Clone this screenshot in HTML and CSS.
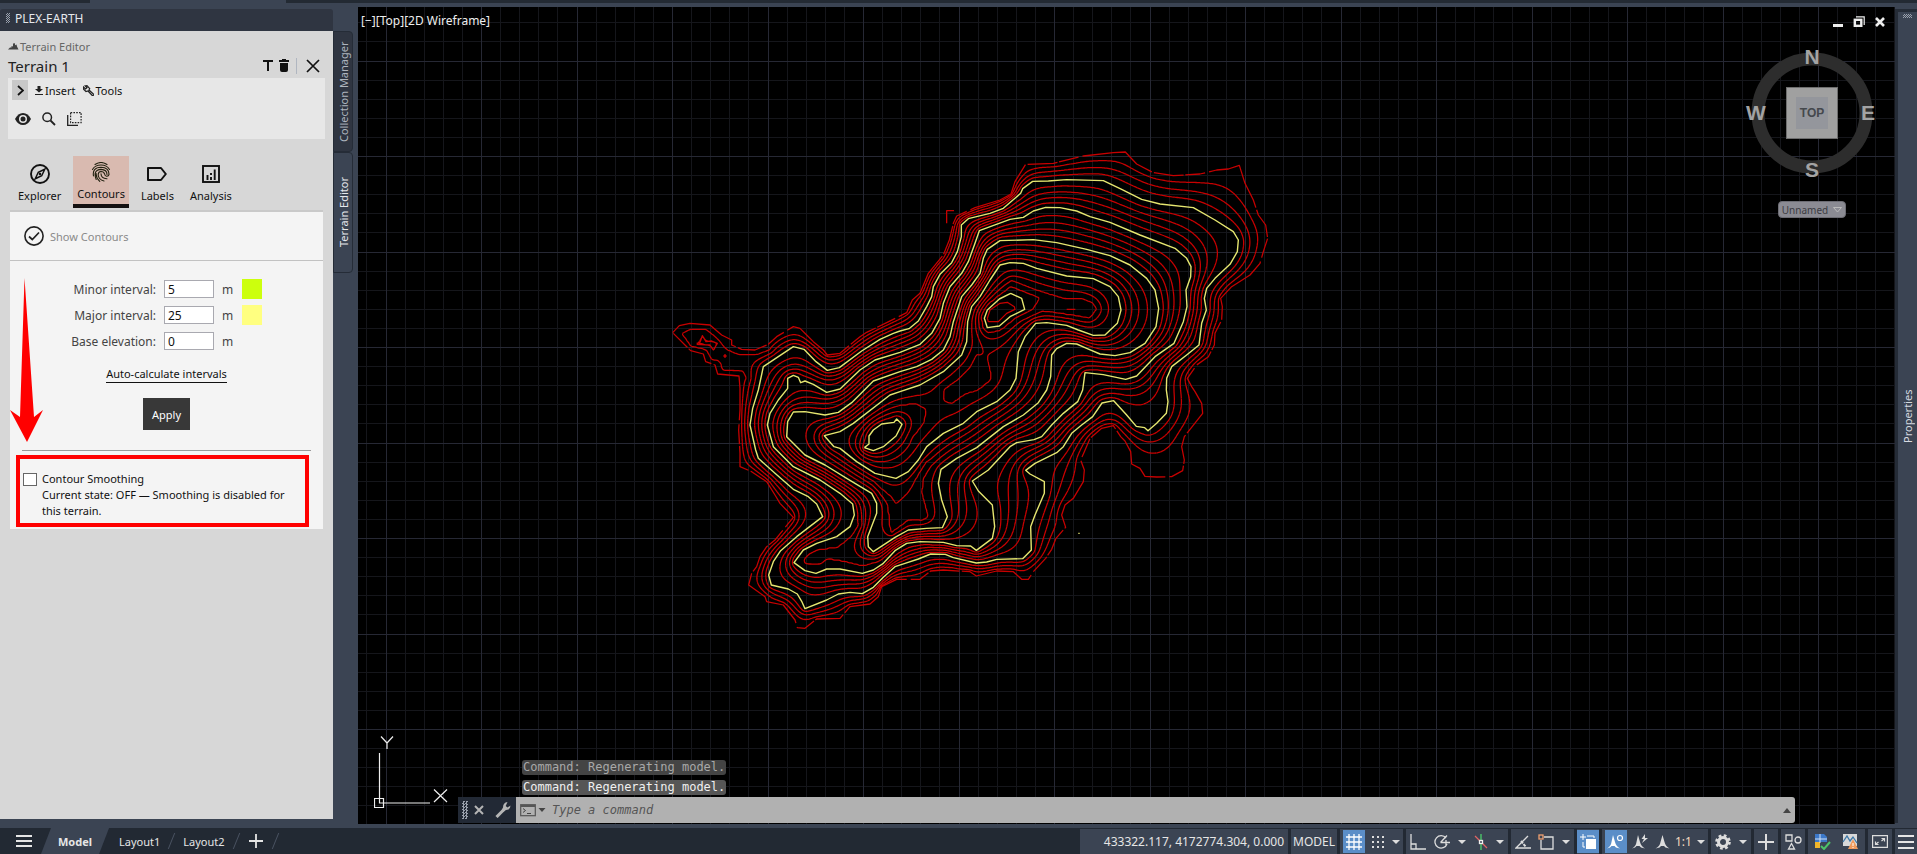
FILE: index.html
```html
<!DOCTYPE html>
<html lang="en">
<head>
<meta charset="utf-8">
<title>Plex-Earth Terrain Editor</title>
<link rel="stylesheet" href="styles.css">
</head>
<body>
<div class="file-strip"><span class="file-tab"></span></div>
<main class="workspace">
  <section class="palette">
    <header class="palette-head"><span class="grip"></span>PLEX-EARTH</header>
    <div class="palette-body">
      <div class="crumb"><svg width="11" height="7" viewBox="0 0 11 7"><path d="M0 6.500 2 4.500h1.500V3L5 3.500V.5L7 .3v2l1.500-.8.5 2 1.500 3z" fill="#444"/></svg>Terrain Editor</div>
      <div class="title-row">
        <h1>Terrain 1</h1>
        <button class="icon-btn" aria-label="Rename"><svg width="10" height="11" viewBox="0 0 10 11"><path d="M0 0h10v2H6v9H4V2H0z" fill="#111"/></svg></button>
        <button class="icon-btn" aria-label="Delete"><svg width="10" height="13" viewBox="0 0 10 13"><path d="M0 1h3V0h4v1h3v2H0zM1 4h8v7q0 2-2 2H3q-2 0-2-2z" fill="#111"/></svg></button>
        <span class="divider"></span>
        <button class="icon-btn close" aria-label="Close"><svg width="14" height="14" viewBox="0 0 14 14"><path d="M1 1l12 12M13 1 1 13" stroke="#111" stroke-width="1.700"/></svg></button>
      </div>
      <div class="toolbox">
        <div class="tool-row">
          <button class="expand" aria-label="Expand"><svg width="7" height="11" viewBox="0 0 7 11"><path d="M1 1l5 4.500L1 10" fill="none" stroke="#111" stroke-width="1.800"/></svg></button>
          <button class="text-btn"><svg width="8" height="9" viewBox="0 0 8 9"><path d="M2.500 0h3v3H8L4 6.500 0 3h2.500zM0 8h8v1H0z" fill="#222"/></svg>Insert</button>
          <button class="text-btn"><svg width="11" height="11" viewBox="0 0 11 11"><path d="M4 .7 6.700 3.500 6 5l5 4.500L9.700 11 5 6 3 6.500.3 4l.2-2L2.500 4 4 2.800 2.200 1z" fill="none" stroke="#222" stroke-width="1.200"/></svg>Tools</button>
        </div>
        <div class="tool-row second">
          <button class="icon-btn" aria-label="Visibility"><svg width="16" height="12" viewBox="0 0 16 12"><path d="M0 6Q3 0 8 0t8 6q-3 6-8 6T0 6z" fill="#222"/><circle cx="8" cy="6" r="4" fill="#e7e7e7"/><circle cx="8" cy="6" r="2.500" fill="#222"/></svg></button>
          <button class="icon-btn" aria-label="Zoom"><svg width="14" height="14" viewBox="0 0 14 14"><circle cx="5.200" cy="5.200" r="4.300" fill="none" stroke="#222" stroke-width="1.500"/><path d="M8.500 8.500 13 13" stroke="#222" stroke-width="1.800"/></svg></button>
          <button class="icon-btn" aria-label="Select region"><svg width="15" height="14" viewBox="0 0 15 14"><path d="M.7 3v10.300H11" fill="none" stroke="#222" stroke-width="1.300"/><rect x="3.600" y=".6" width="10.500" height="10" fill="none" stroke="#222" stroke-width="1.200" stroke-dasharray="1.600 1.200"/></svg></button>
        </div>
      </div>
      <nav class="tabs">
        <button class="tab"><svg width="20" height="20" viewBox="0 0 20 20"><circle cx="10" cy="10" r="9" fill="none" stroke="#111" stroke-width="1.900"/><path d="M14.800 5.200 11.700 11.700 5.200 14.800 8.300 8.300z" fill="none" stroke="#111" stroke-width="1.500"/><circle cx="10" cy="10" r="1.300" fill="#111"/></svg>Explorer</button>
        <button class="tab active"><svg width="20" height="20" viewBox="0 0 20 20" fill="none" stroke="#221" stroke-width="1.100" stroke-linecap="round"><path d="M4 2.500Q10-1.500 16 2.500M1.500 7.500Q4 3 10 3t8.500 4.500M2.500 14Q1 5.500 10 5.200q8.200.3 8 7.300-.5 2-2.500 1.700-1.700-.3-1.900-2.200Q13 9.500 10 9.500q-3 .3-2.800 3.500.4 4.500 5.800 6M5.200 17.500Q1.500 8 10 7.400q6 .3 6 5M8.800 19.300Q4.800 15.500 5.200 11.500M10 11.800q.2 5 6 4.900"/></svg>Contours</button>
        <button class="tab"><svg width="20" height="20" viewBox="0 0 20 20"><path d="M1 4h13l4.800 6-4.800 6H1z" fill="none" stroke="#111" stroke-width="2" stroke-linejoin="round"/></svg>Labels</button>
        <button class="tab"><svg width="20" height="20" viewBox="0 0 20 20"><rect x="2" y="2" width="16" height="16" fill="none" stroke="#111" stroke-width="1.900"/><path d="M6.500 11v5M10 13v3M10 9v2M13.700 5.500V16" stroke="#111" stroke-width="1.900"/></svg>Analysis</button>
      </nav>
      <div class="panel">
        <div class="show-row"><svg width="20" height="20" viewBox="0 0 20 20"><circle cx="10" cy="10" r="9.100" fill="none" stroke="#222" stroke-width="1.600"/><path d="M5 10.500 8.300 13.500 15 6.500" fill="none" stroke="#222" stroke-width="1.700"/></svg><span>Show Contours</span></div>
        <form class="intervals" onsubmit="return false">
          <label for="minor">Minor interval:</label><input id="minor" type="text" value="5"><span>m</span><button type="button" class="swatch lime" aria-label="Minor colour"></button>
          <label for="major">Major interval:</label><input id="major" type="text" value="25"><span>m</span><button type="button" class="swatch yellow" aria-label="Major colour"></button>
          <label for="base">Base elevation:</label><input id="base" type="text" value="0"><span>m</span><span></span>
        </form>
        <a class="auto" href="#">Auto-calculate intervals</a>
        <button class="apply">Apply</button>
        <hr>
        <div class="smoothing">
          <input id="smooth" type="checkbox">
          <label for="smooth">Contour Smoothing<br>Current state: OFF — Smoothing is disabled for this terrain.</label>
          <span class="highlight"></span>
        </div>
        <svg class="arrow" width="34" height="166" viewBox="0 0 34 166"><path d="M14.500 0 24 139 33 132 17 164 0 132 10 139z" fill="#f00"/></svg>
      </div>
    </div>
  </section>
  <nav class="side-tabs">
    <button class="side-tab">Collection Manager</button>
    <button class="side-tab current">Terrain Editor</button>
  </nav>
  <section class="viewport" id="viewport">
    <svg class="grid" id="grid"></svg>
    <svg class="terrain" width="620" height="500" viewBox="0 0 1860 1500" fill="none" stroke-width="3.800" stroke-linejoin="round">
      <path id="minors" stroke="#c80000"/>
      <path id="outline" stroke="#c80000" stroke-dasharray="230 7 90 5 60 12"/>
      <path id="majors" stroke="#e6e670" stroke-width="4.200"/>
      <path d="M1255 1178h4v4h-4z" fill="#e6e670"/>
    </svg>
    <div class="view-label">[−][Top][2D Wireframe]</div>
    <div class="win-controls">
      <button aria-label="Minimize"><svg width="12" height="12" viewBox="0 0 12 12"><path d="M1 8h10v3H1z" fill="#eee"/></svg></button>
      <button aria-label="Restore"><svg width="12" height="12" viewBox="0 0 12 12"><path d="M3 .8h8.200V9" fill="none" stroke="#eee" stroke-width="1.200"/><rect x="1.800" y="3.800" width="6.500" height="6" fill="none" stroke="#eee" stroke-width="2.400"/></svg></button>
      <button aria-label="Close"><svg width="12" height="12" viewBox="0 0 12 12"><path d="M2 2l8 8M10 2 2 10" stroke="#eee" stroke-width="2.600"/></svg></button>
    </div>
    <div class="viewcube">
      <svg width="140" height="152" viewBox="-4 -10 140 152" font-family="Liberation Sans, sans-serif" font-weight="bold" text-anchor="middle">
        <circle cx="66" cy="66" r="54" fill="none" stroke="#2d2d2d" stroke-width="13"/>
        <rect x="40.500" y="40.500" width="51" height="51" fill="#a0a0a0" stroke="#6e6e6e"/>
        <rect x="50" y="50" width="32" height="32" fill="#94969c"/>
        <g font-size="21" fill="#a3a3a3"><text x="66" y="17">N</text><text x="66" y="130">S</text><text x="10" y="73">W</text><text x="122" y="73">E</text></g>
        <text x="66" y="70" font-size="12" fill="#45484d">TOP</text>
      </svg>
      <button class="ucs-name">Unnamed <svg width="9" height="6" viewBox="0 0 9 6"><path d="M.5.5h8L4.500 5z" fill="none" stroke="#bbb"/></svg></button>
    </div>
    <svg class="ucs" width="76" height="72" viewBox="0 0 76 72" fill="none" stroke="#eee" stroke-width="1.200"><path d="M5.500 17v50H56M.5 62.500h9v9h-9zM7 .5l6 6.500 6-6.500M13 7v6M60 53.500l13 12.500M73 53.500 60 66"/></svg>
    <div class="command">
      <div class="history"><span class="old">Command: Regenerating model.</span><span>Command: Regenerating model.</span></div>
      <div class="command-line">
        <div class="command-tools">
          <span class="grip tall"></span>
          <button aria-label="Close"><svg width="10" height="10" viewBox="0 0 10 10"><path d="M1 1l8 8M9 1 1 9" stroke="#b5b5b5" stroke-width="2"/></svg></button>
          <button aria-label="Customize"><svg width="16" height="16" viewBox="0 0 16 16"><path d="M1.500 15 9 7.500" stroke="#b5b5b5" stroke-width="3"/><path d="M12.500 0Q8 .5 8 5.500L6.500 8.500 8.500 9.700 11 8Q15.500 8 15.500 3.500L12.500 5.500 10.700 4z" fill="#b5b5b5"/></svg></button>
        </div>
        <label class="prompt" for="cmd"><svg width="26" height="13" viewBox="0 0 26 13"><rect x=".7" y=".7" width="14.600" height="11" fill="none" stroke="#555" stroke-width="1.200"/><path d="M1 2h14" stroke="#555" stroke-width="2"/><path d="M3 4.500 5.500 6.500 3 8.500M7 9.500h4" fill="none" stroke="#444"/><path d="M18.500 4h7L22 8z" fill="#444"/></svg></label>
        <input id="cmd" type="text" placeholder="Type a command">
        <button class="expand-up" aria-label="History"><svg width="8" height="5" viewBox="0 0 8 5"><path d="M0 5 4 0l4 5z" fill="#444"/></svg></button>
      </div>
    </div>
  </section>
  <aside class="properties"><span class="grip wide"></span><button>Properties</button></aside>
</main>
<footer class="status">
  <div class="layouts">
    <button class="menu" aria-label="Menu"><svg width="16" height="12" viewBox="0 0 16 12"><path d="M0 1h16M0 6h16M0 11h16" stroke="#e5e5e5" stroke-width="2"/></svg></button>
    <button class="layout model">Model</button>
    <button class="layout">Layout1</button><i></i>
    <button class="layout">Layout2</button><i></i>
    <button class="plus" aria-label="New layout"><svg width="14" height="14" viewBox="0 0 14 14"><path d="M7 0v14M0 7h14" stroke="#e5e5e5" stroke-width="1.800"/></svg></button><i></i>
  </div>
  <div class="status-tools">
    <div class="group coords">433322.117, 4172774.304, 0.000</div>
    <button class="group space">MODEL</button>
    <div class="group w64">
      <button class="on" aria-label="Grid"><svg width="16" height="16" viewBox="0 0 16 16"><path d="M3 0v16M8 0v16M13 0v16M0 3h16M0 8h16M0 13h16" stroke="#fff" stroke-width="1.300"/></svg></button>
      <button aria-label="Snap"><svg width="14" height="14" viewBox="0 0 14 14"><path d="M1 2h12M1 7h12M1 12h12" stroke="#ddd" stroke-width="2" stroke-dasharray="2 3"/></svg></button>
      <button class="caret" aria-label="Snap options"></button>
    </div>
    <div class="group w104">
      <button aria-label="Ortho"><svg width="16" height="16" viewBox="0 0 16 16" fill="none" stroke="#ddd" stroke-width="1.300"><path d="M1 0v15h15M1 10h5v5"/></svg></button>
      <button aria-label="Polar"><svg width="17" height="16" viewBox="0 0 17 16" fill="none" stroke="#ddd" stroke-width="1.300"><path d="M12 4a6.200 6.200 0 1 0 1 6M6.500 8.500H16M6.500 8.500 13 1.500M12 6v5"/></svg></button>
      <button class="caret" aria-label="Polar options"></button>
      <button aria-label="Isodraft"><svg width="14" height="16" viewBox="0 0 14 16" fill="none" stroke-width="1.300"><path d="M1 2l12 12" stroke="#e06464"/><path d="M7 0v16" stroke="#4dd06a"/><rect x="5.500" y="6.500" width="3" height="3" fill="#3b4453" stroke="#eee"/></svg></button>
      <button class="caret" aria-label="Isodraft options"></button>
    </div>
    <div class="group w64">
      <button aria-label="Tracking"><svg width="16" height="14" viewBox="0 0 16 14" fill="none" stroke="#ddd" stroke-width="1.300"><path d="M16 13H1L13 1"/><path d="M6 6l5 6" stroke-width="2" stroke-dasharray="3 1"/></svg></button>
      <button aria-label="Object snap"><svg width="17" height="16" viewBox="0 0 17 16" fill="none" stroke="#ddd" stroke-width="1.300"><path d="M6 3h9v12H3V6"/><rect x="1" y="1" width="4" height="4" stroke="#f0a070"/></svg></button>
      <button class="caret" aria-label="Snap modes"></button>
    </div>
    <div class="group w22"><button class="on" aria-label="Transparency"><svg width="17" height="16" viewBox="0 0 17 16"><path d="M3 0v6M0 3h6" stroke="#fff"/><path d="M7 2h7v2M3 8v5h2" stroke="#fff" fill="none"/><path d="M6 5h10v10H6z" fill="#fff"/></svg></button></div>
    <div class="group w106">
      <button class="on" aria-label="Annotation visibility"><svg width="17" height="16" viewBox="0 0 17 16"><path d="M6 1 8 8q1 4 5 6.500l-4-1-1.500-1.500h-3L3 13.500l-3 1q4-2.500 4.500-6.500z" fill="#fff"/><circle cx="13" cy="4" r="2.500" fill="none" stroke="#fff" stroke-width="1.200"/></svg></button>
      <button aria-label="Auto scale"><svg width="17" height="16" viewBox="0 0 17 16"><path d="M6 1 8 8q1 4 5 6.500l-4-1-1.500-1.500h-3L3 13.500l-3 1q4-2.500 4.500-6.500zM13 0 9.500 5H12l-2 4 6-5h-3z" fill="#ddd"/></svg></button>
      <button aria-label="Annotation scale"><svg width="15" height="16" viewBox="0 0 15 16"><path d="M7.500 1 9.500 8q1 4 5 6.500l-4-1L9 12H6l-1.500 1.500-4 1q4.500-2.500 5-6.500z" fill="#ddd"/></svg></button>
      <button class="scale">1:1</button>
      <button class="caret" aria-label="Scale list"></button>
    </div>
    <div class="group w40">
      <button aria-label="Workspace"><svg width="16" height="16" viewBox="0 0 16 16"><circle cx="8" cy="8" r="4.500" fill="none" stroke="#ddd" stroke-width="3"/><circle cx="8" cy="8" r="6.500" fill="none" stroke="#ddd" stroke-width="2.600" stroke-dasharray="2.700 2.400"/></svg></button>
      <button class="caret" aria-label="Workspace options"></button>
    </div>
    <div class="group w24"><button aria-label="Annotation monitor"><svg width="16" height="16" viewBox="0 0 16 16"><path d="M8 0v16M0 8h16" stroke="#ddd" stroke-width="2"/></svg></button></div>
    <div class="group w24"><button aria-label="Isolate"><svg width="17" height="17" viewBox="0 0 17 17" fill="none" stroke="#ddd" stroke-width="1.300"><path d="M1 2h6v6H1zM6.500 10.500 9.500 16h-6z"/><circle cx="13" cy="7" r="3"/></svg></button></div>
    <div class="group w57">
      <button aria-label="Drawing status"><svg width="17" height="17" viewBox="0 0 17 17"><path d="M1 1h9l3 3v5H1z" fill="#3c78c8"/><path d="M1 9h5v6H1z" fill="#f0b429"/><path d="M1 6h12M6 1v9" stroke="#cfe0f5"/><path d="M7 13l3 3 6-7" fill="none" stroke="#4dc46a" stroke-width="2"/></svg></button>
      <button aria-label="Performance"><svg width="17" height="17" viewBox="0 0 17 17"><path d="M1 1h14v12H1z" fill="#d8d8d8"/><path d="M1 9 5 3l3 5 3-4 4 6" fill="none" stroke="#3c78a8" stroke-width="1.300"/><path d="M11 6l5 10H6z" fill="#f09a5c"/><path d="M11 10v3M11 14v1" stroke="#fff"/></svg></button>
    </div>
    <div class="group w24"><button aria-label="Clean screen"><svg width="16" height="13" viewBox="0 0 16 13" fill="none" stroke="#ddd" stroke-width="1.200"><path d="M.6.6h14.800v11.800H.600zM9.500 3.500h3v3M12.500 3.500 9.500 6M3.500 6.500v3h3M3.500 9.500 6.500 7"/></svg></button></div>
    <div class="group w22"><button aria-label="Customization"><svg width="16" height="14" viewBox="0 0 16 14"><path d="M0 1h16M0 7h16M0 13h16" stroke="#e5e5e5" stroke-width="2"/></svg></button></div>
  </div>
</footer>
<script src="terrain.js"></script>
</body>
</html>
```
FILE: styles.css
```css
* { box-sizing: border-box; }
body {
  margin: 0;
  height: 100vh;
  display: flex;
  flex-direction: column;
  overflow: hidden;
  background: #3b4453;
  color: #222;
  font-family: "Noto Sans", sans-serif;
  font-size: 11px;
}
button {
  font: inherit;
  color: inherit;
  background: none;
  border: 0;
  padding: 0;
  display: inline-flex;
  align-items: center;
  justify-content: center;
}
svg { display: block; flex: none; }

.file-strip { height: 3px; background: #232a33; }
.file-tab { display: block; width: 196px; height: 3px; margin-left: 90px; background: #3b4453; }
.workspace { flex: 1; min-height: 0; display: flex; }

.palette { width: 333px; display: flex; flex-direction: column; padding: 6px 0 9px; }
.palette-head {
  height: 22px;
  display: flex;
  align-items: center;
  gap: 5px;
  padding: 0 6px 4px;
  background: #2f3541;
  color: #e6e8ec;
  font-size: 12px;
  border-radius: 3px 3px 0 0;
}
.grip {
  width: 4px;
  height: 10px;
  background: repeating-conic-gradient(#9aa1ad 0 25%, transparent 0 50%) 0 0 / 2px 2px;
}
.palette-body { flex: 1; background: #d7d7d7; padding: 7px 8px 0; }
.crumb { display: flex; align-items: center; gap: 1px; height: 16px; color: #666; }
.title-row { display: flex; align-items: center; height: 23px; padding-right: 5px; }
.title-row h1 { flex: 1; margin: 0; font-size: 15px; font-weight: 400; }
.title-row .icon-btn { margin-left: 6px; }
.divider { width: 1px; height: 16px; margin-left: 7px; background: #b0b6c0; }
.title-row .close { margin-left: 9px; }
.toolbox { height: 61px; margin-top: 1px; background: #e7e7e7; padding: 2px 4px; }
.tool-row { display: flex; align-items: center; gap: 7px; height: 20px; color: #111; }
.tool-row.second { height: 36px; gap: 11px; padding: 2px 3px 0; }
.expand { width: 16px; height: 20px; background: #c8c8c8; }
.text-btn { gap: 2px; }
.tabs { display: flex; gap: 8px; padding: 17px 0 0 6px; height: 71px; color: #111; }
.tab { flex-direction: column; justify-content: flex-start; gap: 4px; height: 52px; padding: 8px 4px 0; }
.tab.active { background: #d9bab0; border-bottom: 4px solid #151111; padding-top: 6px; }
.panel {
  position: relative;
  margin: 0 2px;
  padding-bottom: 10px;
  border-top: 2px solid #c9c9c9;
  background: #f4f4f4;
  display: flex;
  flex-direction: column;
  align-items: center;
}
.show-row {
  align-self: stretch;
  display: flex;
  align-items: center;
  gap: 6px;
  height: 49px;
  padding-left: 14px;
  border-bottom: 1px solid #c2c2c2;
  color: #8a8a8a;
}
.intervals {
  display: grid;
  grid-template-columns: 146px 50px 12px 20px;
  grid-auto-rows: 20px;
  column-gap: 8px;
  row-gap: 6px;
  align-items: center;
  align-self: stretch;
  padding-top: 18px;
  color: #444;
  font-size: 12px;
}
.intervals label { text-align: right; }
.intervals input {
  height: 18px;
  width: 50px;
  padding: 0 3px;
  border: 1px solid #a9a9b0;
  background: #fff;
  color: #111;
  font: inherit;
}
.swatch { width: 20px; height: 20px; }
.lime { background: #ccff0d; }
.yellow { background: #ffff80; }
.auto { margin-top: 15px; line-height: 16px; color: #111; text-decoration: none; border-bottom: 1px solid #111; }
.apply { margin-top: 15px; width: 47px; height: 32px; background: #383838; color: #fff; }
.panel hr { width: 289px; margin: 20px 0 0; border: 0; border-top: 1px solid #999; }
.smoothing {
  position: relative;
  align-self: stretch;
  display: flex;
  gap: 5px;
  margin: 20px 13px 0;
  padding-right: 12px;
  line-height: 16px;
  color: #111;
}
.smoothing input {
  appearance: none;
  flex: none;
  width: 14px;
  height: 13px;
  margin: 2px 0 0;
  border: 1px solid #666;
  background: #fff;
}
.highlight { position: absolute; left: -7px; top: -16px; right: 1px; height: 72px; border: 4px solid #f00; }
.arrow { position: absolute; left: 0; top: 66px; }

.side-tabs { width: 25px; padding-top: 28px; display: flex; flex-direction: column; }
.side-tab {
  writing-mode: vertical-rl;
  transform: rotate(180deg);
  width: 20px;
  height: 121px;
  border: 1px solid #252c37;
  border-radius: 4px 0 0 4px;
  background: #2f3541;
  color: #aeb4be;
}
.side-tab.current { background: #3b4453; color: #e6e8ec; }

.viewport { position: relative; flex: 1; margin: 4px 0 4px; background: #000; overflow: hidden; }
.grid { position: absolute; left: 0; top: 0; width: 100%; height: 100%; }
.terrain { position: absolute; left: 302px; top: 133px; }
.view-label { position: absolute; left: 3px; top: 5px; color: #eee; font-size: 12px; }
.win-controls { position: absolute; right: 9px; top: 9px; display: flex; gap: 9px; }
.viewcube { position: absolute; right: 13px; top: 30px; display: flex; flex-direction: column; align-items: center; gap: 12px; }
.ucs-name {
  gap: 5px;
  width: 68px;
  height: 17px;
  border: 1px solid #6d6d74;
  border-radius: 4px;
  background: #8b8b93;
  color: #3c3c42;
  font-size: 10px;
}
.ucs { position: absolute; left: 16px; bottom: 16px; }
.command { position: absolute; left: 100px; right: 100px; bottom: 1px; }
.history {
  display: flex;
  flex-direction: column;
  align-items: flex-start;
  gap: 5px;
  margin: 0 0 2px 64px;
  font: 12px/15px "DejaVu Sans Mono", monospace;
}
.history span { background: #565656; color: #f0f0f0; padding: 0 1px; border-radius: 3px; }
.history .old { background: #444; color: #a8a8a8; }
.command-line { display: flex; height: 26px; border-radius: 3px; background: #b1b1b1; }
.command-tools { display: flex; align-items: center; gap: 6px; width: 58px; padding-left: 4px; background: #222935; }
.command-tools button:last-child { margin-left: 5px; }
.grip.tall { width: 6px; height: 18px; background-size: 3px 3px; }
.prompt { display: flex; align-items: center; padding: 0 6px 0 4px; }
.command-line input {
  flex: 1;
  border: 0;
  padding: 0;
  background: none;
  font: italic 12px "DejaVu Sans Mono", monospace;
}
.command-line input::placeholder { color: #555; opacity: 1; }
.expand-up { width: 16px; }

.properties {
  width: 22px;
  margin: 6px 0 5px;
  border-left: 3px solid #252c37;
  border-top: 3px solid #252c37;
  display: flex;
  flex-direction: column;
  align-items: center;
  color: #d6dae0;
}
.grip.wide { width: 9px; height: 4px; margin-top: 2px; }
.properties button { flex: 1; padding-top: 8px; writing-mode: vertical-rl; transform: rotate(180deg); }

.status { height: 26px; display: flex; justify-content: space-between; background: #222933; color: #e6e6e6; }
.layouts { display: flex; align-items: center; }
.menu { width: 41px; padding-left: 7px; }
.layout { height: 26px; padding: 0 10px; }
.layout.model { padding: 0 17px; font-weight: 700; background: #3b4453; clip-path: polygon(10px 0, 100% 0, calc(100% - 10px) 100%, 0 100%); }
.layouts i { width: 1px; height: 16px; background: #4a5362; transform: skewX(-22deg); margin: 0 1px; }
.plus { width: 36px; }
.status-tools { display: flex; gap: 3px; padding-top: 1px; }
.group { display: flex; align-items: center; justify-content: space-around; background: #3b4453; }
.coords { width: 208px; justify-content: flex-end; padding-right: 4px; font-size: 12px; }
.space { width: 46px; font-size: 12px; }
.w22 { width: 22px; }
.w24 { width: 24px; }
.w40 { width: 40px; }
.w57 { width: 57px; }
.w64 { width: 63px; }
.w104 { width: 102px; }
.w106 { width: 106px; }
.on { width: 22px; height: 23px; background: #5b8ec8; }
.scale { color: #f2d9c0; font-size: 12px; }
.caret::before { content: ""; border: 4px solid transparent; border-top-color: #ddd; border-bottom: 0; }
```
FILE: terrain.js
```js
// Survey lines in terrain units; each is "x,y x,y ..."
const parse = (s) => s.trim().split(/\s+/).map((p) => p.split(",").map(Number));

const MAJORS = [
  [0, `720,573 747,566 775,543 800,500 815,470 820,440 840,403 875,368 892,335 904,290 904,255 925,236 990,220 1030,205 1065,175 1082,160 1088,146 1118,124 1165,123 1220,119 1330,122 1385,148 1445,178 1500,192 1600,203 1665,240 1720,275 1735,300 1732,335 1710,373 1665,415 1640,445 1633,475 1639,510 1625,550 1617,615 1580,645 1535,680 1520,715 1519,750 1524,785 1519,820 1490,850 1464,872 1454,863 1429,859 1400,825 1361,782 1326,789 1298,830 1265,855 1235,880 1210,920 1190,938 1125,970 1097,991 1110,1002 1153,1025 1153,1060 1125,1125 1112,1160 1114,1230 1088,1256 1010,1258 980,1266 949,1269 880,1253 856,1243 812,1242 775,1257 735,1270 705,1280 670,1312 640,1342 607,1361 570,1357 535,1362 500,1380 435,1406 425,1384 412,1362 385,1347 334,1335 326,1305 340,1265 362,1232 410,1190 488,1130 470,1092 445,1070 400,1048 345,1000 295,955 287,930 270,855 278,805 295,750 310,680 400,620 432,628 468,665 502,691 538,683 605,633 660,598 700,580 720,573`],
  [5, `720,637 780,613 815,580 840,535 850,490 870,440 905,400 925,365 945,310 958,272 1050,238 1090,232 1120,213 1157,202 1200,203 1250,213 1290,230 1350,247 1440,285 1545,325 1580,355 1593,380 1592,410 1578,450 1581,500 1570,545 1542,610 1485,650 1430,708 1397,718 1330,704 1275,698 1268,750 1253,785 1210,820 1175,855 1145,890 1122,899 1070,908 1050,920 985,990 937,1023 955,1053 997,1095 1004,1160 997,1195 949,1231 932,1218 890,1217 850,1207 780,1205 740,1210 705,1232 670,1270 640,1290 607,1300 540,1287 500,1287 468,1300 435,1292 402,1268 430,1230 470,1210 530,1190 570,1160 583,1125 578,1092 540,1060 480,1020 400,980 340,920 322,855 330,820 355,780 383,745 383,715 400,706 415,712 422,728 435,723 460,733 500,757 540,747 600,690 645,660 720,637`],
  [10, `720,695 770,680 815,658 850,630 870,590 880,545 895,500 905,470 935,435 960,400 970,355 982,328 1020,302 1120,299 1190,308 1280,328 1350,347 1410,375 1460,415 1485,450 1496,505 1488,560 1455,610 1410,638 1365,647 1320,642 1280,625 1250,612 1220,610 1190,626 1175,645 1172,710 1160,750 1135,788 1090,825 1030,860 950,923 890,955 843,988 835,1030 845,1080 862,1130 847,1163 800,1165 745,1170 705,1192 640,1235 625,1220 623,1190 650,1120 650,1090 635,1060 560,1015 495,975 435,945 380,890 383,845 400,816 435,815 495,825 535,817 575,788 640,723 720,695`],
  [15, `720,755 780,735 850,695 905,645 920,605 923,545 935,500 960,470 990,420 1020,375 1050,368 1090,370 1130,385 1220,408 1300,416 1350,440 1375,470 1383,510 1372,550 1335,585 1300,586 1255,570 1220,556 1160,548 1127,550 1095,590 1075,635 1068,715 1050,750 1010,785 950,815 910,850 850,880 800,920 775,960 745,995 708,1015 645,1000 590,965 540,925 522,920 493,887 540,875 580,850 690,765 720,755`],
  [20, `613,923 627,912 627,888 640,870 665,852 702,847 710,837 726,853 708,888 670,920 640,932 613,923`],
  [20, `1052,460 1085,475 1094,508 1050,530 1018,558 982,563 973,535 982,510 1018,477 1052,460`]
];

const OUTLINE = `38,578 58,557 90,550 150,555 185,585 215,600 215,615 245,628 285,630 325,613 350,590 400,560 420,565 440,585 460,605 490,630 502,645 540,640 600,590 620,577 680,548 740,518 757,480 780,460 805,400 850,345 868,300 880,250 890,228 945,203 1020,180 1053,162 1065,125 1097,73 1180,70 1270,48 1360,38 1396,36 1430,72 1480,98 1540,107 1620,102 1670,90 1705,87 1738,76 1755,130 1780,180 1795,225 1817,255 1823,295 1810,335 1800,370 1770,405 1715,440 1682,475 1687,500 1685,540 1665,580 1663,615 1645,650 1610,675 1582,715 1595,740 1605,755 1625,790 1628,820 1573,890 1565,920 1573,960 1568,992 1535,1010 1490,1011 1455,1009 1440,985 1415,972 1412,935 1395,903 1382,890 1360,857 1325,865 1290,895 1273,935 1262,960 1273,990 1270,1025 1240,1075 1215,1095 1205,1125 1217,1162 1188,1195 1175,1228 1157,1255 1120,1295 1105,1318 1085,1318 1060,1295 1010,1293 949,1308 930,1295 850,1290 812,1293 780,1318 710,1318 665,1340 655,1370 630,1392 570,1400 540,1435 470,1437 435,1465 412,1463 405,1440 370,1395 320,1385 315,1370 266,1335 275,1300 290,1280 300,1250 320,1220 345,1200 400,1132 360,1090 345,1065 320,1025 275,995 240,980 240,940 236,870 240,810 240,745 237,708 173,702 165,675 137,665 130,642 92,632 38,578`;

const SUMMIT = "982,535 990,510 1020,490 1042,487 1063,500 1065,508 1040,520 1015,545 985,545 982,535";
const HOLLOW = "110,610 120,607 127,587 138,605 155,603 172,610 160,630 150,615 110,613";
const SPOTS = [
  [-3, "330,630 290,645 235,643 200,630 165,590 135,567 95,567 65,580 92,618 140,628 155,658 180,663 187,690 250,690 262,715"],
  [-2, HOLLOW],
  [12, "640,1036 668,1070 685,1095 687,1145 693,1180 745,1140 785,1142 805,1130 785,1060 788,1015 818,970"],
  [13, "642,1024 670,1050 695,1070 708,1092 745,1055 770,1010 798,965"],
  [6, "640,1267 610,1277 560,1265 500,1255 480,1272 435,1270 430,1258 445,1243 470,1230 535,1222 575,1190 600,1150"],
  [19, "965,525 982,495 1052,440 1090,455 1138,473 1118,508 1070,530 1020,570 985,578 967,560 965,525"],
  [18, "1052,420 1120,448 1220,478 1265,475 1300,490 1310,508 1288,535 1240,525 1145,513 1100,535"],
  [19, "1220,508 1245,508"],
  [17, "950,645 978,652 990,695 990,720 950,752 915,760 875,790 850,780 850,750 900,715 930,685 950,645"],
  [17, "720,795 770,793 795,808 793,845 750,900"]
];

const CELL = 4, W = 465, H = 375;
const z = new Float32Array(W * H).fill(-4);
const fixed = new Uint8Array(W * H).fill(1);

// Nodes inside the outline are free
const ring = parse(OUTLINE);
for (let j = 0; j < H; j++) {
  const y = j * CELL + 0.01, xs = [];
  for (let k = 1; k < ring.length; k++) {
    const [x0, y0] = ring[k - 1], [x1, y1] = ring[k];
    if ((y0 > y) !== (y1 > y)) xs.push(x0 + (x1 - x0) * (y - y0) / (y1 - y0));
  }
  xs.sort((a, b) => a - b);
  for (let k = 0; k + 1 < xs.length; k += 2)
    for (let i = Math.ceil(xs[k] / CELL); i * CELL < xs[k + 1]; i++) { fixed[j * W + i] = 0; z[j * W + i] = 3; }
}
const burn = (level, pts) => {
  for (let k = 1; k < pts.length; k++) {
    const [x0, y0] = pts[k - 1], [x1, y1] = pts[k];
    const n = Math.ceil(Math.hypot(x1 - x0, y1 - y0));
    for (let t = 0; t <= n; t++) {
      const c = Math.round((y0 + (y1 - y0) * t / n) / CELL) * W + Math.round((x0 + (x1 - x0) * t / n) / CELL);
      z[c] = level; fixed[c] = 1;
    }
  }
};
SPOTS.forEach(([l, s]) => burn(l, parse(s)));
MAJORS.forEach(([l, s]) => burn(l, parse(s)));

// Relax the surface between the survey lines
for (let it = 0; it < 300; it++)
  for (let j = 1; j < H - 1; j++)
    for (let i = 1; i < W - 1; i++) {
      const c = j * W + i;
      if (!fixed[c]) z[c] += 1.85 * ((z[c - 1] + z[c + 1] + z[c - W] + z[c + W]) / 4 - z[c]);
    }
const s = z.slice();
for (let j = 1; j < H - 1; j++)
  for (let i = 1; i < W - 1; i++) {
    const c = j * W + i;
    s[c] = z[c] * 0.4 + (z[c - 1] + z[c + 1] + z[c - W] + z[c + W]) * 0.15;
  }

// Marching squares for the minor levels
let d = "";
for (let level = -3; level < 20; level++) {
  if (level % 5 === 0) continue;
  const L = level - 0.03;
  for (let j = 0; j < H - 1; j++)
    for (let i = 0; i < W - 1; i++) {
      const c = j * W + i, v = [s[c], s[c + 1], s[c + W + 1], s[c + W]];
      const up = v.filter((q) => q > L).length;
      if (!up || up === 4) continue;
      const xy = [[0, 0], [1, 0], [1, 1], [0, 1]], hit = [];
      for (let e = 0; e < 4; e++) {
        const a = v[e], b = v[(e + 1) % 4];
        if ((a > L) !== (b > L)) {
          const t = (L - a) / (b - a), p = xy[e], q = xy[(e + 1) % 4];
          hit.push(`${((i + p[0] + (q[0] - p[0]) * t) * CELL).toFixed(1)} ${((j + p[1] + (q[1] - p[1]) * t) * CELL).toFixed(1)}`);
        }
      }
      for (let h = 0; h + 1 < hit.length; h += 2) d += `M${hit[h]}L${hit[h + 1]}`;
    }
}
const toPath = (pts) => "M" + pts.map((p) => p.join(" ")).join("L");
const extras = toPath(parse(HOLLOW)) + toPath(parse(SUMMIT)) + "M1220 508h26M860 250V212h22M190 648h10M195 642v12";
document.getElementById("minors").setAttribute("d", d + extras);
document.getElementById("outline").setAttribute("d", toPath(ring));
document.getElementById("majors").setAttribute("d", MAJORS.map((m) => toPath(parse(m[1]))).join(""));

// Drawing grid: every fifth line is a major one
const view = document.getElementById("viewport"), STEP = 19.1;
let minor = "", major = "";
for (let k = -1; k * STEP < view.clientWidth; k++) {
  const x = Math.floor(28 + k * STEP) + 0.5;
  if (k % 5 === 0) major += `M${x} 0V2000`; else minor += `M${x} 0V2000`;
}
for (let k = -2; k * STEP < view.clientHeight; k++) {
  const y = Math.floor(54 + k * STEP) + 0.5;
  if (k % 5 === 0) major += `M0 ${y}H4000`; else minor += `M0 ${y}H4000`;
}
document.getElementById("grid").innerHTML = `<path d="${minor}" stroke="#15161b"/><path d="${major}" stroke="#262834"/>`;
```
